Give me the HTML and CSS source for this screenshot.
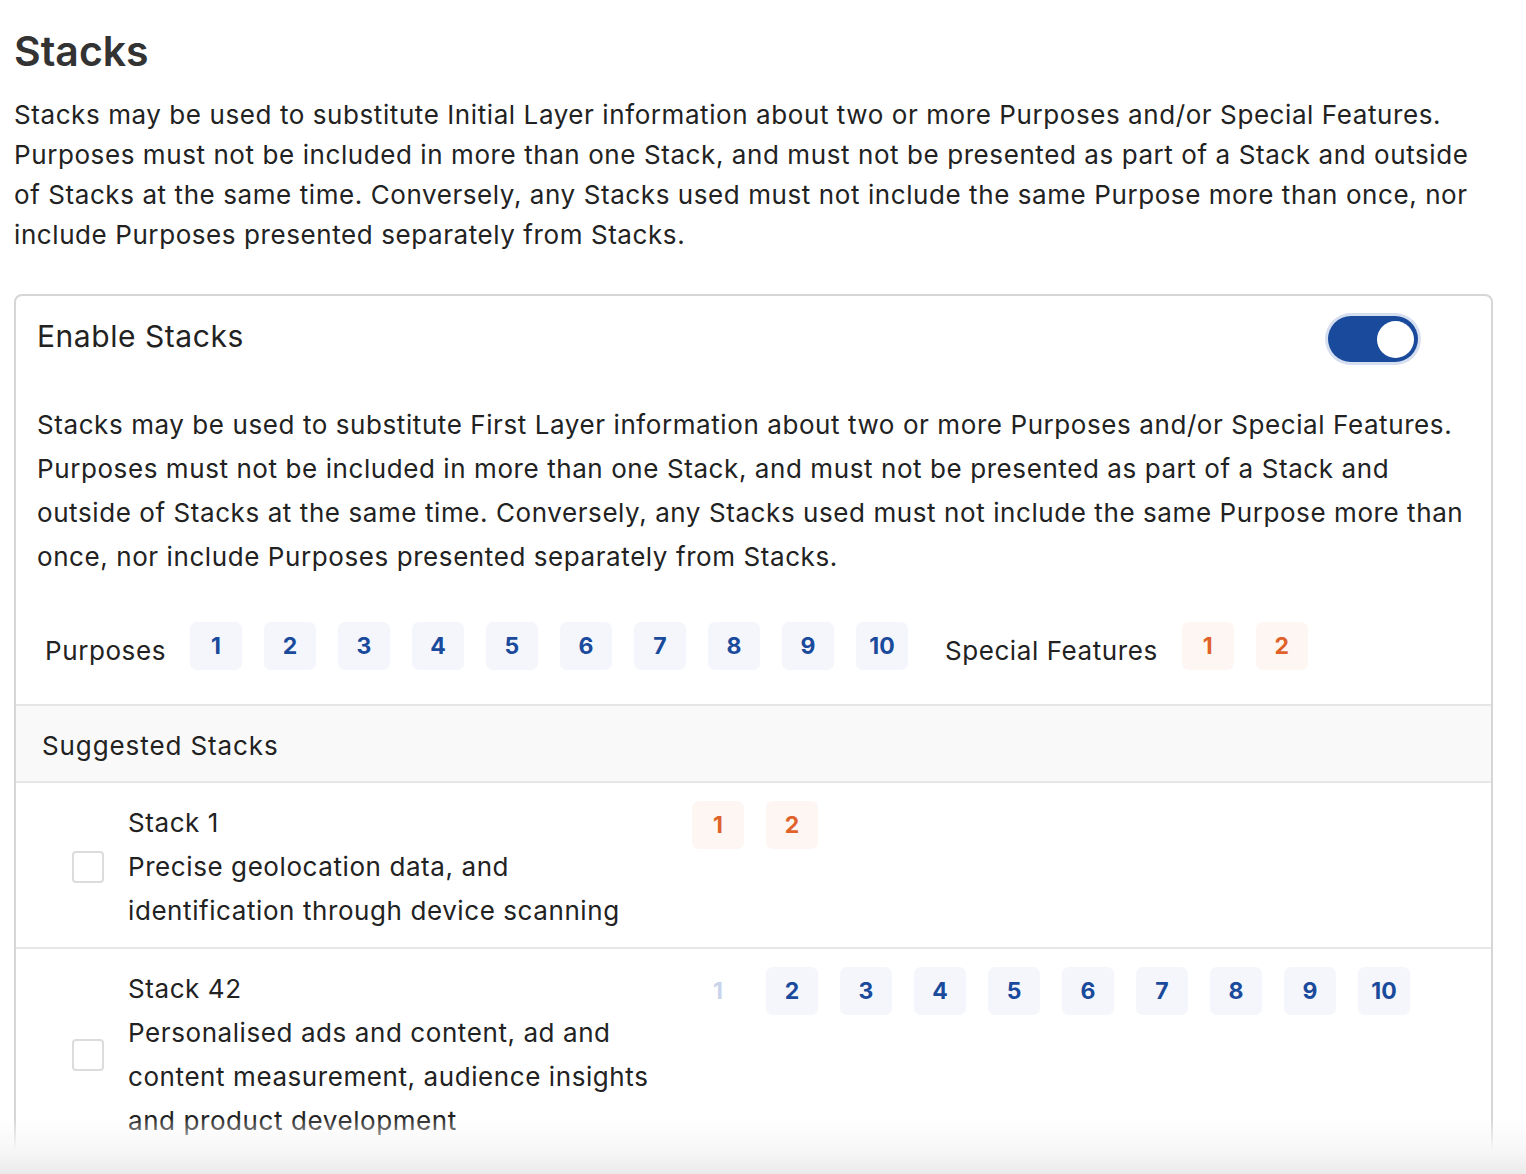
FILE: index.html
```html
<!DOCTYPE html>
<html lang="en">
<head>
<meta charset="utf-8">
<title>Stacks</title>
<link rel="stylesheet" href="styles.css">
</head>
<body>
<main class="page">
  <h1 class="title">Stacks</h1>
  <p class="intro">Stacks may be used to substitute Initial Layer information about two or more Purposes and/or Special Features. Purposes must not be included in more than one Stack, and must not be presented as part of a Stack and outside of Stacks at the same time. Conversely, any Stacks used must not include the same Purpose more than once, nor include Purposes presented separately from Stacks.</p>

  <section class="card">
    <div class="card-head">
      <h2 class="card-title">Enable Stacks</h2>
      <span class="toggle" role="switch" aria-checked="true"><span class="knob"></span></span>
    </div>
    <p class="card-text">Stacks may be used to substitute First Layer information about two or more Purposes and/or Special Features. Purposes must not be included in more than one Stack, and must not be presented as part of a Stack and outside of Stacks at the same time. Conversely, any Stacks used must not include the same Purpose more than once, nor include Purposes presented separately from Stacks.</p>

    <div class="legend">
      <span class="legend-label">Purposes</span>
      <div class="badges">
        <span class="badge">1</span><span class="badge">2</span><span class="badge">3</span><span class="badge">4</span><span class="badge">5</span><span class="badge">6</span><span class="badge">7</span><span class="badge">8</span><span class="badge">9</span><span class="badge">10</span>
      </div>
      <span class="legend-label legend-sf">Special Features</span>
      <div class="badges">
        <span class="badge badge-sf">1</span><span class="badge badge-sf">2</span>
      </div>
    </div>

    <div class="section-head">Suggested Stacks</div>

    <div class="stack-row">
      <span class="checkbox"></span>
      <div class="stack-text">
        <div class="stack-name">Stack 1</div>
        <div class="stack-desc">Precise geolocation data, and identification through device scanning</div>
      </div>
      <div class="badges stack-badges">
        <span class="badge badge-sf">1</span><span class="badge badge-sf">2</span>
      </div>
    </div>

    <div class="stack-row">
      <span class="checkbox"></span>
      <div class="stack-text">
        <div class="stack-name">Stack 42</div>
        <div class="stack-desc">Personalised ads and content, ad and content measurement, audience insights and product development</div>
      </div>
      <div class="badges stack-badges">
        <span class="badge badge-off">1</span><span class="badge">2</span><span class="badge">3</span><span class="badge">4</span><span class="badge">5</span><span class="badge">6</span><span class="badge">7</span><span class="badge">8</span><span class="badge">9</span><span class="badge">10</span>
      </div>
    </div>
  </section>
</main>
<div class="fade"></div>
</body>
</html>
```
FILE: styles.css
```css
* { box-sizing: border-box; }

body {
  margin: 0;
  background: #fff;
  color: #222;
  font-family: Inter, "Noto Sans", "Liberation Sans", sans-serif;
}

.page {
  padding: 24px 33px 0 14px;
}

.title {
  margin: 0;
  font-size: 41px;
  font-weight: 600;
  color: #333;
  line-height: 54px;
}

.intro {
  margin: 17px 0 39px;
  font-size: 26px;
  line-height: 40px;
  letter-spacing: 0.58px;
  color: #222;
}

.card {
  border: 2px solid #d6d6d6;
  border-radius: 8px;
  min-height: 1000px;
}

.card-head {
  display: flex;
  align-items: flex-start;
  justify-content: space-between;
  padding: 17px 73px 0 21px;
}

.card-title {
  margin: 5px 0 0;
  font-size: 30px;
  line-height: 36px;
  font-weight: 400;
  letter-spacing: 0.55px;
  color: #222;
}

.toggle {
  width: 90px;
  height: 46px;
  border-radius: 23px;
  background: #1a4a9c;
  box-shadow: 0 0 0 3px #d6dff0;
  display: flex;
  align-items: center;
  justify-content: flex-end;
  padding: 0 4px;
  margin-top: 3px;
}

.knob {
  width: 37px;
  height: 37px;
  border-radius: 50%;
  background: #fff;
}

.card-text {
  margin: 41px 0 0;
  padding: 0 21px;
  font-size: 26px;
  line-height: 44px;
  letter-spacing: 0.58px;
}

.legend {
  display: flex;
  align-items: center;
  padding: 43px 20px 34px 29px;
}

.legend-label {
  font-size: 26px;
  letter-spacing: 0.58px;
  margin-right: 24px;
  margin-top: 8px;
}

.legend-sf {
  margin-left: 37px;
}

.badges {
  display: flex;
  gap: 22px;
}

.badge {
  width: 52px;
  height: 48px;
  border-radius: 7px;
  background: #f4f6fb;
  color: #1a4a9c;
  font-weight: 700;
  font-size: 23px;
  display: flex;
  align-items: center;
  justify-content: center;
}

.badge-sf {
  background: #fdf6f3;
  color: #e0622a;
}

.badge-off {
  background: transparent;
  color: #c9d4ea;
}

.section-head {
  background: #f9f9f9;
  border-top: 2px solid #e6e6e6;
  border-bottom: 2px solid #e6e6e6;
  height: 79px;
  display: flex;
  align-items: center;
  padding: 4px 0 0 26px;
  font-size: 26px;
  letter-spacing: 0.9px;
}

.stack-row {
  display: flex;
  align-items: flex-start;
  padding: 18px 0 14px 56px;
  border-bottom: 2px solid #e6e6e6;
}

.checkbox {
  flex: none;
  width: 32px;
  height: 32px;
  border: 2px solid #dcdcdc;
  border-radius: 4px;
  align-self: center;
  margin-right: 24px;
}

.stack-text {
  flex: none;
  width: 540px;
  margin-right: 24px;
  font-size: 26px;
  line-height: 44px;
  letter-spacing: 0.58px;
}

.fade {
  position: fixed;
  left: 0;
  right: 0;
  bottom: 0;
  height: 56px;
  background: linear-gradient(to bottom, rgba(255,255,255,0) 0%, #f7f7f7 58%, #eaeaea 100%);
}
```
